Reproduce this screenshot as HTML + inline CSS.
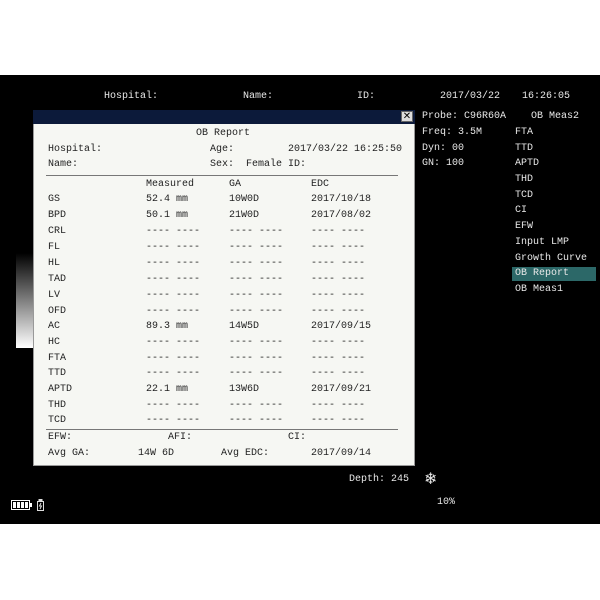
<!DOCTYPE html>
<html><head><style>
html,body{margin:0;padding:0;background:#fff;width:600px;height:600px;overflow:hidden}
#scr{position:absolute;left:0;top:75px;width:600px;height:449px;background:#000}
.t{position:absolute;font-family:"Liberation Mono",monospace;font-size:10px;line-height:12px;white-space:pre;color:#e8e8e8}
.d{color:#222}
#dlg{position:absolute;left:33px;top:110px;width:382px;height:356px;background:#f6f7f3;border:1px solid #999;box-sizing:border-box}
#tb{position:absolute;left:33px;top:110px;width:382px;height:14px;background:#0c1a3a}
#x{position:absolute;left:401px;top:111px;width:12px;height:11px;background:#ddd;border:1px solid #666;box-sizing:border-box;font:10px/9px "Liberation Sans",sans-serif;text-align:center;color:#000}
.ln{position:absolute;left:46px;width:352px;height:1px;background:#777}
#grad{position:absolute;left:16px;top:253px;width:17px;height:95px;background:linear-gradient(#000,#fff)}
#sel{position:absolute;left:512px;top:267px;width:84px;height:14px;background:#2c6868}
</style></head><body>
<div id="scr"></div>
<div id="grad"></div>
<div class="t" style="left:104px;top:91px">Hospital:</div>
<div class="t" style="left:243px;top:91px">Name:</div>
<div class="t" style="left:357px;top:91px">ID:</div>
<div class="t" style="left:440px;top:91px">2017/03/22</div>
<div class="t" style="left:522px;top:91px">16:26:05</div>

<div class="t" style="left:422px;top:111px">Probe: C96R60A</div>
<div class="t" style="left:422px;top:127px">Freq: 3.5M</div>
<div class="t" style="left:422px;top:143px">Dyn: 00</div>
<div class="t" style="left:422px;top:158px">GN: 100</div>
<div id="sel"></div>
<div class="t" style="left:531px;top:111px">OB Meas2</div>
<div class="t" style="left:515px;top:127px">FTA</div>
<div class="t" style="left:515px;top:143px">TTD</div>
<div class="t" style="left:515px;top:158px">APTD</div>
<div class="t" style="left:515px;top:174px">THD</div>
<div class="t" style="left:515px;top:190px">TCD</div>
<div class="t" style="left:515px;top:205px">CI</div>
<div class="t" style="left:515px;top:221px">EFW</div>
<div class="t" style="left:515px;top:237px">Input LMP</div>
<div class="t" style="left:515px;top:253px">Growth Curve</div>
<div class="t" style="left:515px;top:268px">OB Report</div>
<div class="t" style="left:515px;top:284px">OB Meas1</div>

<div id="dlg"></div>
<div id="tb"></div>
<div id="x">✕</div>
<div class="t d" style="left:196px;top:128px">OB Report</div>
<div class="t d" style="left:48px;top:144px">Hospital:</div>
<div class="t d" style="left:210px;top:144px">Age:</div>
<div class="t d" style="left:288px;top:144px">2017/03/22 16:25:50</div>
<div class="t d" style="left:48px;top:159px">Name:</div>
<div class="t d" style="left:210px;top:159px">Sex:  Female ID:</div>
<div class="ln" style="top:175px"></div>
<div class="t d" style="left:146px;top:179px">Measured</div>
<div class="t d" style="left:229px;top:179px">GA</div>
<div class="t d" style="left:311px;top:179px">EDC</div>

<div class="t d" style="left:48px;top:194px">GS</div><div class="t d" style="left:146px;top:194px">52.4 mm</div><div class="t d" style="left:229px;top:194px">10W0D</div><div class="t d" style="left:311px;top:194px">2017/10/18</div>
<div class="t d" style="left:48px;top:210px">BPD</div><div class="t d" style="left:146px;top:210px">50.1 mm</div><div class="t d" style="left:229px;top:210px">21W0D</div><div class="t d" style="left:311px;top:210px">2017/08/02</div>
<div class="t d" style="left:48px;top:226px">CRL</div><div class="t d" style="left:146px;top:226px">---- ----</div><div class="t d" style="left:229px;top:226px">---- ----</div><div class="t d" style="left:311px;top:226px">---- ----</div>
<div class="t d" style="left:48px;top:242px">FL</div><div class="t d" style="left:146px;top:242px">---- ----</div><div class="t d" style="left:229px;top:242px">---- ----</div><div class="t d" style="left:311px;top:242px">---- ----</div>
<div class="t d" style="left:48px;top:258px">HL</div><div class="t d" style="left:146px;top:258px">---- ----</div><div class="t d" style="left:229px;top:258px">---- ----</div><div class="t d" style="left:311px;top:258px">---- ----</div>
<div class="t d" style="left:48px;top:274px">TAD</div><div class="t d" style="left:146px;top:274px">---- ----</div><div class="t d" style="left:229px;top:274px">---- ----</div><div class="t d" style="left:311px;top:274px">---- ----</div>
<div class="t d" style="left:48px;top:290px">LV</div><div class="t d" style="left:146px;top:290px">---- ----</div><div class="t d" style="left:229px;top:290px">---- ----</div><div class="t d" style="left:311px;top:290px">---- ----</div>
<div class="t d" style="left:48px;top:306px">OFD</div><div class="t d" style="left:146px;top:306px">---- ----</div><div class="t d" style="left:229px;top:306px">---- ----</div><div class="t d" style="left:311px;top:306px">---- ----</div>
<div class="t d" style="left:48px;top:321px">AC</div><div class="t d" style="left:146px;top:321px">89.3 mm</div><div class="t d" style="left:229px;top:321px">14W5D</div><div class="t d" style="left:311px;top:321px">2017/09/15</div>
<div class="t d" style="left:48px;top:337px">HC</div><div class="t d" style="left:146px;top:337px">---- ----</div><div class="t d" style="left:229px;top:337px">---- ----</div><div class="t d" style="left:311px;top:337px">---- ----</div>
<div class="t d" style="left:48px;top:353px">FTA</div><div class="t d" style="left:146px;top:353px">---- ----</div><div class="t d" style="left:229px;top:353px">---- ----</div><div class="t d" style="left:311px;top:353px">---- ----</div>
<div class="t d" style="left:48px;top:368px">TTD</div><div class="t d" style="left:146px;top:368px">---- ----</div><div class="t d" style="left:229px;top:368px">---- ----</div><div class="t d" style="left:311px;top:368px">---- ----</div>
<div class="t d" style="left:48px;top:384px">APTD</div><div class="t d" style="left:146px;top:384px">22.1 mm</div><div class="t d" style="left:229px;top:384px">13W6D</div><div class="t d" style="left:311px;top:384px">2017/09/21</div>
<div class="t d" style="left:48px;top:400px">THD</div><div class="t d" style="left:146px;top:400px">---- ----</div><div class="t d" style="left:229px;top:400px">---- ----</div><div class="t d" style="left:311px;top:400px">---- ----</div>
<div class="t d" style="left:48px;top:415px">TCD</div><div class="t d" style="left:146px;top:415px">---- ----</div><div class="t d" style="left:229px;top:415px">---- ----</div><div class="t d" style="left:311px;top:415px">---- ----</div>
<div class="ln" style="top:429px"></div>
<div class="t d" style="left:48px;top:432px">EFW:</div>
<div class="t d" style="left:168px;top:432px">AFI:</div>
<div class="t d" style="left:288px;top:432px">CI:</div>
<div class="t d" style="left:48px;top:448px">Avg GA:</div>
<div class="t d" style="left:138px;top:448px">14W 6D</div>
<div class="t d" style="left:221px;top:448px">Avg EDC:</div>
<div class="t d" style="left:311px;top:448px">2017/09/14</div>

<div class="t" style="left:349px;top:474px">Depth: 245</div>
<div class="t" style="left:424px;top:470px;font-size:16px;line-height:18px;font-family:'DejaVu Sans',sans-serif">❄</div>
<div class="t" style="left:437px;top:497px">10%</div>
<svg style="position:absolute;left:11px;top:498px" width="36" height="14">
<rect x="0.5" y="2.5" width="18" height="9" fill="none" stroke="#fff"/>
<rect x="2" y="4" width="3" height="6" fill="#fff"/><rect x="6" y="4" width="3" height="6" fill="#fff"/><rect x="10" y="4" width="3" height="6" fill="#fff"/><rect x="14" y="4" width="3" height="6" fill="#fff"/>
<rect x="19" y="5" width="2" height="4" fill="#fff"/>
<rect x="26.5" y="3.5" width="6" height="9" fill="none" stroke="#ddd"/>
<rect x="27.5" y="1" width="4" height="2" fill="#ddd"/>
<path d="M30 5 L28.5 8 L30.5 8 L29 11" stroke="#ddd" fill="none"/>
</svg>
</body></html>
